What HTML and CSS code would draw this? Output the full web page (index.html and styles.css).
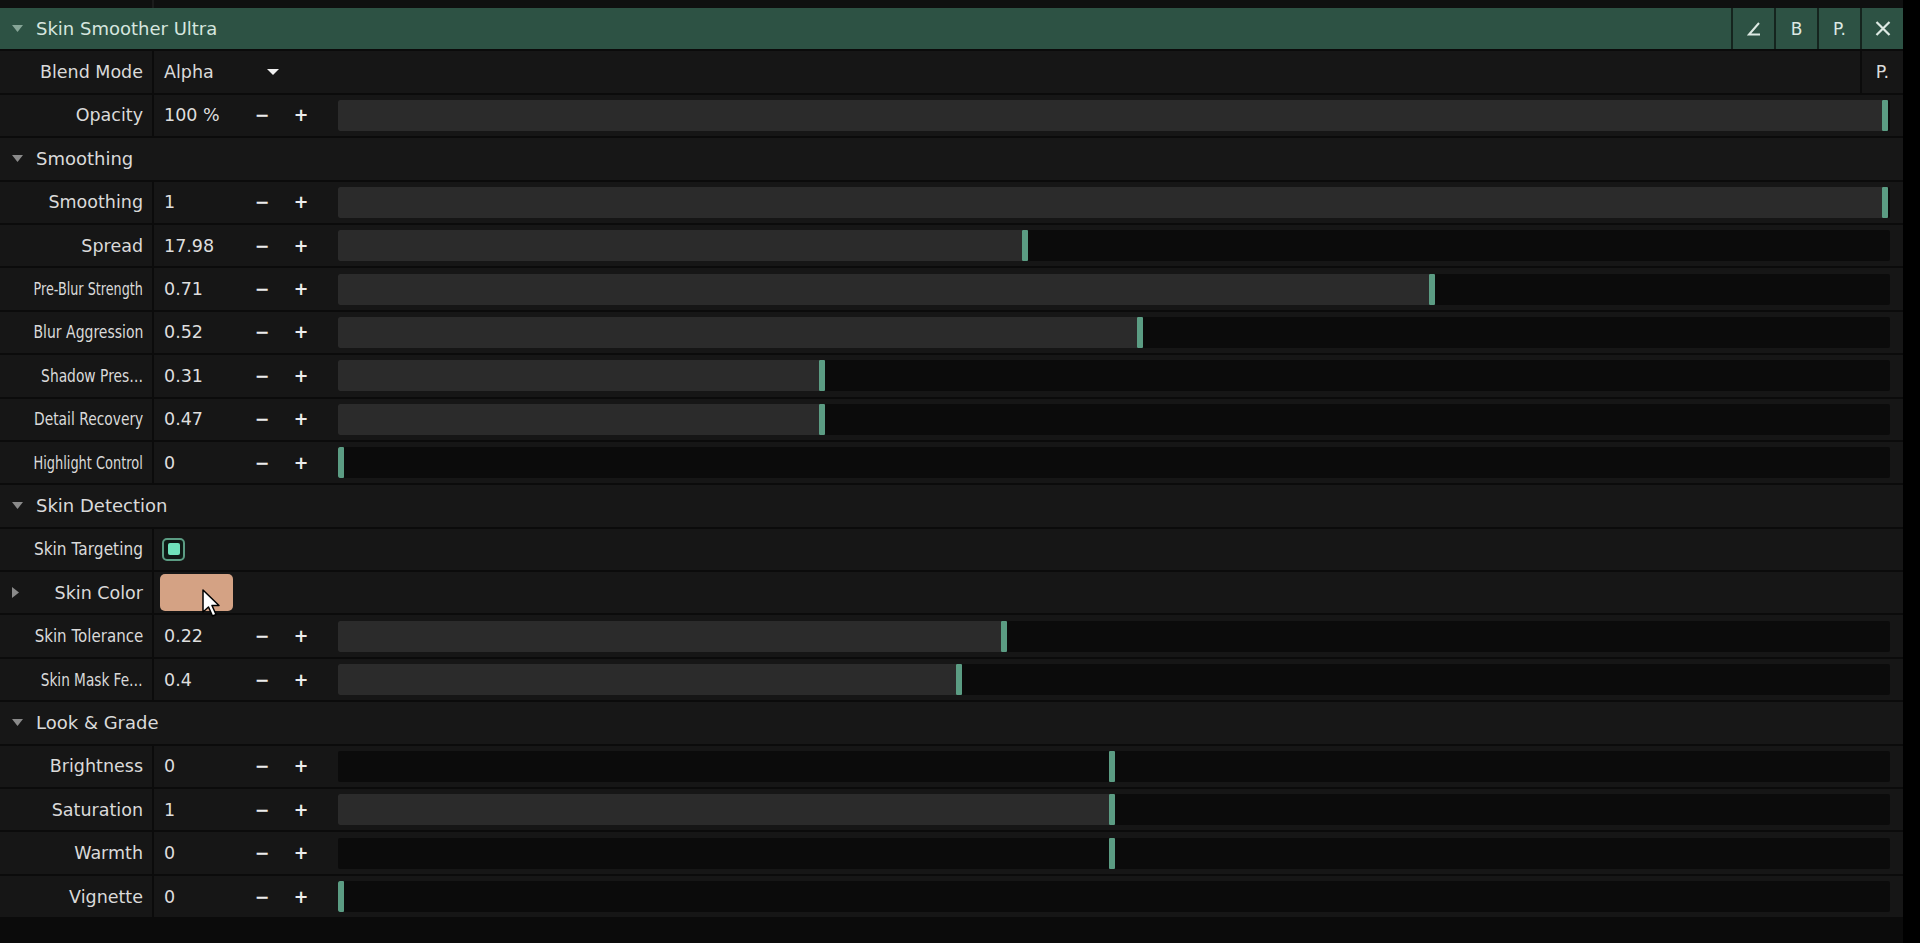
FILE: index.html
```html
<!DOCTYPE html>
<html lang="en">
<head>
    <meta charset="UTF-8">
    <meta name="viewport" content="width=device-width, initial-scale=1.0">
    <title>Skin Smoother Ultra</title>
    <link rel="stylesheet" href="styles.css">
</head>
<body>
<div class="app">

    <!-- tail of the effect above -->
    <div class="strip">
        <div class="strip-label"></div>
    </div>

    <div class="panel">

        <!-- Effect header -->
        <div class="head">
            <div class="head-title">
                <svg class="tri" viewBox="0 0 11 7"><polygon points="0,0 11,0 5.5,7"/></svg>
                Skin Smoother Ultra
            </div>
            <div class="head-tools">
                <div class="tool">
                    <svg width="14" height="14" viewBox="0 0 14 14"><path d="M12 1 L2 12.5 L13 12.5" fill="none" stroke="currentColor" stroke-width="2"/></svg>
                </div>
                <div class="tool">B</div>
                <div class="tool">P.</div>
                <div class="tool">
                    <svg width="16" height="15" viewBox="0 0 16 15"><path d="M1.5 1 L14.5 14 M14.5 1 L1.5 14" fill="none" stroke="currentColor" stroke-width="2.2"/></svg>
                </div>
            </div>
        </div>

        <div class="row">
            <div class="label">Blend Mode</div>
            <div class="body body-flush">
                <div class="select">
                    <span class="select-text">Alpha</span>
                    <svg class="caret" viewBox="0 0 12 6"><polygon points="0,0 12,0 6,6"/></svg>
                </div>
                <div class="row-tool">P.</div>
            </div>
        </div>

        <div class="row">
            <div class="label">Opacity</div>
            <div class="body">
                <span class="value">100 %</span>
                <span class="step">−</span><span class="step">+</span>
                <div class="track"><div class="fill" style="width: 99.5%"></div><div class="knob"></div></div>
            </div>
        </div>

        <!-- Smoothing -->
        <div class="section">
            <svg class="tri" viewBox="0 0 11 7"><polygon points="0,0 11,0 5.5,7"/></svg>
            Smoothing
        </div>

        <div class="row">
            <div class="label">Smoothing</div>
            <div class="body">
                <span class="value">1</span>
                <span class="step">−</span><span class="step">+</span>
                <div class="track"><div class="fill" style="width: 99.5%"></div><div class="knob"></div></div>
            </div>
        </div>

        <div class="row">
            <div class="label">Spread</div>
            <div class="body">
                <span class="value">17.98</span>
                <span class="step">−</span><span class="step">+</span>
                <div class="track"><div class="fill" style="width: 44.1%"></div><div class="knob"></div></div>
            </div>
        </div>

        <div class="row">
            <div class="label"><span class="narrow" style="--fit: 0.73">Pre-Blur Strength</span></div>
            <div class="body">
                <span class="value">0.71</span>
                <span class="step">−</span><span class="step">+</span>
                <div class="track"><div class="fill" style="width: 70.3%"></div><div class="knob"></div></div>
            </div>
        </div>

        <div class="row">
            <div class="label"><span class="narrow" style="--fit: 0.8">Blur Aggression</span></div>
            <div class="body">
                <span class="value">0.52</span>
                <span class="step">−</span><span class="step">+</span>
                <div class="track"><div class="fill" style="width: 51.5%"></div><div class="knob"></div></div>
            </div>
        </div>

        <div class="row">
            <div class="label"><span class="narrow" style="--fit: 0.79">Shadow Pres…</span></div>
            <div class="body">
                <span class="value">0.31</span>
                <span class="step">−</span><span class="step">+</span>
                <div class="track"><div class="fill" style="width: 31%"></div><div class="knob"></div></div>
            </div>
        </div>

        <div class="row">
            <div class="label"><span class="narrow" style="--fit: 0.79">Detail Recovery</span></div>
            <div class="body">
                <span class="value">0.47</span>
                <span class="step">−</span><span class="step">+</span>
                <div class="track"><div class="fill" style="width: 31%"></div><div class="knob"></div></div>
            </div>
        </div>

        <div class="row">
            <div class="label"><span class="narrow" style="--fit: 0.74">Highlight Control</span></div>
            <div class="body">
                <span class="value">0</span>
                <span class="step">−</span><span class="step">+</span>
                <div class="track"><div class="fill" style="width: 0%"></div><div class="knob"></div></div>
            </div>
        </div>

        <!-- Skin Detection -->
        <div class="section">
            <svg class="tri" viewBox="0 0 11 7"><polygon points="0,0 11,0 5.5,7"/></svg>
            Skin Detection
        </div>

        <div class="row">
            <div class="label"><span class="narrow" style="--fit: 0.88">Skin Targeting</span></div>
            <div class="body">
                <div class="check"><div class="check-dot"></div></div>
            </div>
        </div>

        <div class="row">
            <div class="label label-expand">
                <svg class="tri-right" viewBox="0 0 7 11"><polygon points="0,0 7,5.5 0,11"/></svg>
                <span>Skin Color</span>
            </div>
            <div class="body body-swatch">
                <div class="swatch">
                    <svg class="cursor" width="19" height="29" viewBox="0 0 19 29">
                        <path d="M1 1 L1 23 L6.5 18 L10.5 27 L14 25.5 L10 16.5 L17 16.5 Z" fill="#fff" stroke="#000" stroke-width="1.5" stroke-linejoin="round"/>
                    </svg>
                </div>
            </div>
        </div>

        <div class="row">
            <div class="label"><span class="narrow" style="--fit: 0.86">Skin Tolerance</span></div>
            <div class="body">
                <span class="value">0.22</span>
                <span class="step">−</span><span class="step">+</span>
                <div class="track"><div class="fill" style="width: 42.7%"></div><div class="knob"></div></div>
            </div>
        </div>

        <div class="row">
            <div class="label"><span class="narrow" style="--fit: 0.78">Skin Mask Fe…</span></div>
            <div class="body">
                <span class="value">0.4</span>
                <span class="step">−</span><span class="step">+</span>
                <div class="track"><div class="fill" style="width: 39.8%"></div><div class="knob"></div></div>
            </div>
        </div>

        <!-- Look & Grade -->
        <div class="section">
            <svg class="tri" viewBox="0 0 11 7"><polygon points="0,0 11,0 5.5,7"/></svg>
            Look &amp; Grade
        </div>

        <div class="row">
            <div class="label">Brightness</div>
            <div class="body">
                <span class="value">0</span>
                <span class="step">−</span><span class="step">+</span>
                <div class="track"><div class="fill fill-none" style="width: 49.7%"></div><div class="knob"></div></div>
            </div>
        </div>

        <div class="row">
            <div class="label">Saturation</div>
            <div class="body">
                <span class="value">1</span>
                <span class="step">−</span><span class="step">+</span>
                <div class="track"><div class="fill" style="width: 49.7%"></div><div class="knob"></div></div>
            </div>
        </div>

        <div class="row">
            <div class="label">Warmth</div>
            <div class="body">
                <span class="value">0</span>
                <span class="step">−</span><span class="step">+</span>
                <div class="track"><div class="fill fill-none" style="width: 49.7%"></div><div class="knob"></div></div>
            </div>
        </div>

        <div class="row">
            <div class="label">Vignette</div>
            <div class="body">
                <span class="value">0</span>
                <span class="step">−</span><span class="step">+</span>
                <div class="track"><div class="fill" style="width: 0%"></div><div class="knob"></div></div>
            </div>
        </div>

    </div>
</div>
</body>
</html>
```

FILE: styles.css
```css
body {
    margin: 0;
    background: #000;
    font-family: 'DejaVu Sans', 'Liberation Sans', sans-serif;
    font-size: 17.5px;
    color: #dadada;
}

.app {
    width: 1903px;
    height: 943px;
    background: #0b0b0b;
    overflow: hidden;
}

.strip {
    height: 8px;
    background: #0f1010;
    display: flex;
}

.strip-label {
    width: 152px;
    border-right: 2px solid #1b1c1c;
}

/* header + every row share the same pitch */
.head, .row, .section {
    height: 43.4px;
    box-sizing: border-box;
    border-bottom: 2px solid #0b0b0b;
    display: flex;
    align-items: stretch;
}

.head {
    background: #2d5244;
    color: #d6e6df;
    font-size: 18px;
}

.head-title {
    flex: 1;
    display: flex;
    align-items: center;
    gap: 13px;
    padding-left: 12px;
}

.tri {
    width: 11px;
    height: 7px;
    fill: #8a8a8a;
}

.head .tri {
    fill: #86a597;
}

.head-tools {
    display: flex;
}

.tool {
    width: 41px;
    border-left: 2px solid #15241e;
    display: flex;
    align-items: center;
    justify-content: center;
    color: #dde9e3;
    font-size: 17px;
}

.row {
    background: #161616;
}

.section {
    background: #171717;
    align-items: center;
    gap: 13px;
    padding-left: 12px;
    font-size: 18px;
}

.label {
    flex-shrink: 0;
    border-right: 2px solid #0b0b0b;
    display: flex;
    align-items: center;
    justify-content: flex-end;
    padding-right: 9px;
    width: 143px;
    white-space: nowrap;
}

/* long names get squeezed into the column */
.narrow {
    display: inline-block;
    transform: scaleX(var(--fit, 0.8));
    transform-origin: right center;
}

.label-expand {
    justify-content: space-between;
    padding-left: 12px;
    width: 131px;
}

.tri-right {
    width: 7px;
    height: 11px;
    fill: #8a8a8a;
}

.body {
    flex: 1;
    display: flex;
    align-items: center;
    padding: 0 13px 0 10px;
}

.body-flush {
    padding-right: 0;
    align-self: stretch;
}

.value {
    width: 85px;
    flex-shrink: 0;
    color: #dedede;
}

.step {
    width: 26px;
    flex-shrink: 0;
    text-align: center;
    font-weight: bold;
    color: #ececec;
}

.step + .step {
    margin-left: 13px;
}

.track {
    flex: 1;
    height: 31px;
    margin-left: 24px;
    background: #0b0b0b;
    border-radius: 2px;
    display: flex;
    overflow: hidden;
}

.fill {
    background: #2b2b2b;
    flex-shrink: 1;
}

.fill-none {
    background: transparent;
}

.knob {
    width: 6px;
    flex-shrink: 0;
    background: #5b9c83;
    border-radius: 1px;
}

.select {
    flex: 1;
    display: flex;
    align-items: center;
}

.select-text {
    width: 103px;
}

.caret {
    width: 12px;
    height: 6px;
    fill: #f0f0f0;
}

.row-tool {
    width: 41px;
    align-self: stretch;
    border-left: 2px solid #0b0b0b;
    display: flex;
    align-items: center;
    justify-content: center;
    color: #dcdcdc;
}

.check {
    width: 23px;
    height: 23px;
    box-sizing: border-box;
    border: 2px solid #5b9c83;
    border-radius: 5px;
    background: #0f1a16;
    display: flex;
    align-items: center;
    justify-content: center;
    margin-left: -2px;
}

.check-dot {
    width: 12px;
    height: 12px;
    border-radius: 2px;
    background: #70e3bc;
}

.body-swatch {
    padding-left: 6px;
}

.swatch {
    position: relative;
    width: 73px;
    height: 37px;
    border-radius: 5px;
    background: #d4a284;
}

.cursor {
    position: absolute;
    left: 42px;
    top: 15px;
}
```
